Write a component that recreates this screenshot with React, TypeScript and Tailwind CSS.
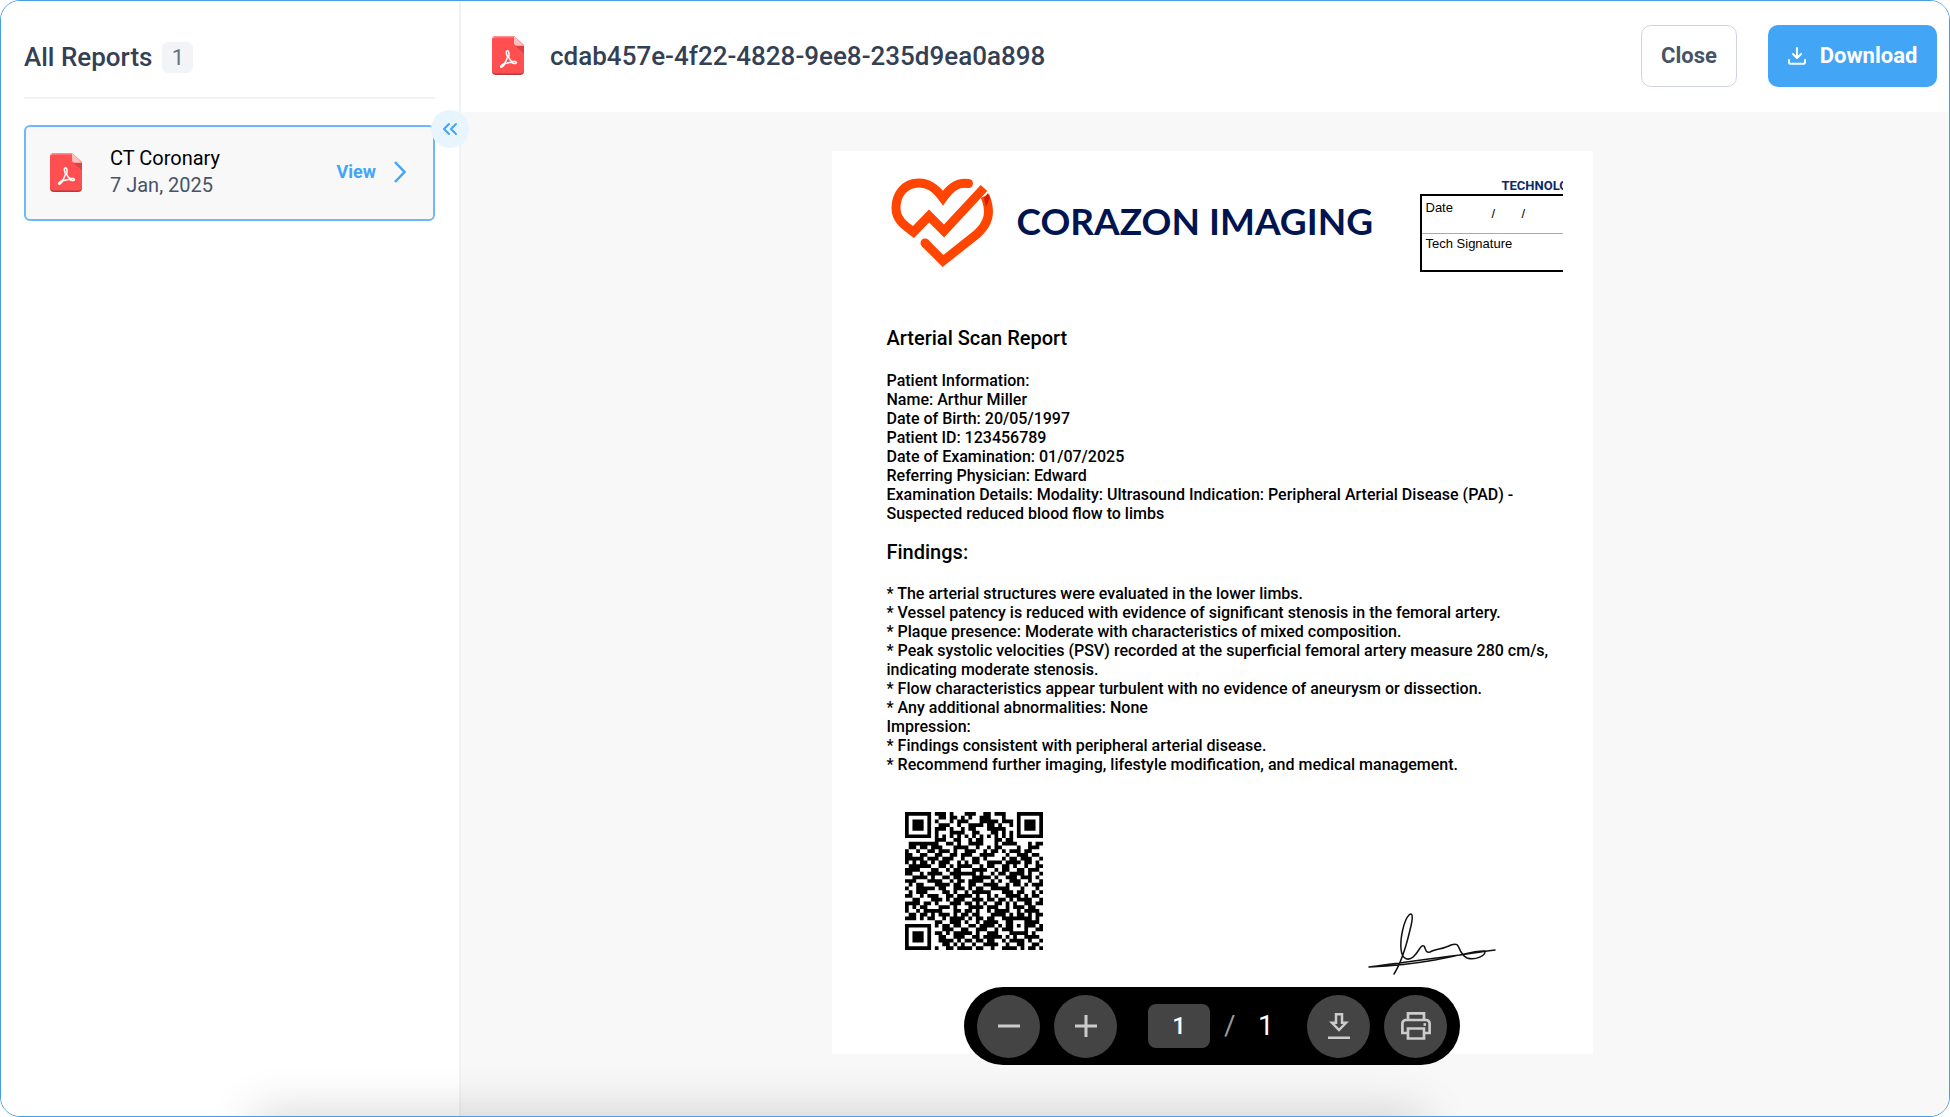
import { ChevronsLeft } from "lucide-react";

const QR_ROWS = [
  "1111111011101000111001101110001111111",
  "1000001001101101010011100010001000001",
  "1011101010001011100011111011101011101",
  "1011101001110010011110110100101011101",
  "1011101011101001011000111110001011101",
  "1000001010001111001100011010101000001",
  "1111111010101010101010101010101111111",
  "0000000011100110010110001101100000000",
  "0111111110011010011110001011110001011",
  "0110110111000111100100101100001001110",
  "1001001101110100111001011010111011000",
  "1100110011001101110011110001001110110",
  "1111101110111001001101000010110111001",
  "1010110101110010101100111101111011010",
  "0111111001101011110010110011010010011",
  "1111000110010110001111001011001101110",
  "1100101111001111111010010110111101001",
  "0011110100110110001111101001110111010",
  "1110001111001011011110010100111001001",
  "0101100011110110011001111001011010111",
  "1001111101100111010110011111000100010",
  "0101110000110100101111100011101100101",
  "1100101110011011110100101001111010110",
  "0011000111010111001110110110101111001",
  "1111011010001110110101001101010011011",
  "1010110001110100011110111001011101100",
  "1001011111000110110100101111001011110",
  "0110110101110101101100011110101101011",
  "1110101100101111010110110011111111010",
  "0000000011001110100101111001100011110",
  "1111111010110110011011110101101011101",
  "1000001000111001100111001011100010011",
  "1011101011010111110100111000111110100",
  "1011101001100111001101111101010011110",
  "1011101001111010110110110010111101001",
  "1000001000110101001001111001001100110",
  "1111111010011011110110010011110101101",
];

const QR_PATH = QR_ROWS.flatMap((row, y) =>
  [...row].map((cell, x) => (cell === "1" ? `M${x} ${y}h1v1h-1z` : "")),
).join("");

function PdfIcon() {
  return (
    <svg viewBox="0 0 32 39" className="h-[39px] w-8 shrink-0" aria-hidden="true">
      <path d="M4 1h18l10 9v25a4 4 0 0 1-4 4H4a4 4 0 0 1-4-4V5a4 4 0 0 1 4-4z" fill="#b53a3d" />
      <path d="M4 0h18l10 9v24.500a4 4 0 0 1-4 4H4a4 4 0 0 1-4-4V4a4 4 0 0 1 4-4z" fill="#ff4f50" />
      <path d="M4 0h18v1.500H4A4 4 0 0 0 .3 3.600 4 4 0 0 1 4 0z" fill="#ff8e8e" />
      <path d="M23 9.500h9v8z" fill="#d94345" />
      <path d="M22 0l10 9.700h-7a3 3 0 0 1-3-3z" fill="#ffc0c0" />
      <path
        d="M15.400 14.800c-1.600 0-1.200 3.400.2 6.200-.9 2.700-2.200 5.300-3.400 6.800-2.300 1-4 2.300-3.600 3 .6 1.100 2.700-.4 4.200-2.900 2-.8 4.200-1.400 6.200-1.700 1.900 1.300 5.100 2 5.400.6.300-1.200-2.400-1.600-4.700-1.300-1.300-1-2.300-2.500-3.100-4.200.6-2.200.8-6.500-1.200-6.500z"
        fill="none"
        stroke="#fff"
        strokeWidth="1.500"
        strokeLinejoin="round"
      />
    </svg>
  );
}

function DownloadIcon() {
  return (
    <svg viewBox="0 0 18 18" className="h-[18px] w-[18px]" fill="none" stroke="currentColor" strokeWidth="2" strokeLinecap="round" strokeLinejoin="round" aria-hidden="true">
      <path d="M9 1v9.500M5 7l4 4 4-4M1 13v2.500a1.200 1.200 0 0 0 1.200 1.200h13.600a1.200 1.200 0 0 0 1.200-1.200V13" />
    </svg>
  );
}

function Sidebar() {
  return (
    <aside className="relative flex w-[460px] shrink-0 flex-col border-r-2 border-[#f1f2f6] bg-white pr-6 pl-[23px]">
      <div className="flex h-[98px] items-center gap-2.5 border-b-2 border-[#f1f2f6] pt-5 pb-1">
        <h1 className="text-[26px] leading-8 font-medium text-[#344054]">All Reports</h1>
        <span className="flex h-[31px] w-[31px] items-center justify-center rounded-md bg-[#f2f4f7] text-[22px] text-[#667085]">1</span>
      </div>
      <ul className="mt-[26px]">
        <li className="flex h-24 items-center rounded-md border-2 border-[#6db8f9] bg-[#f8f8f8] pr-[27px] pb-0.5 pl-6">
          <PdfIcon />
          <div className="ml-7 grow text-xl leading-[27px]">
            <p className="text-black">CT Coronary</p>
            <p className="text-[#475467]">7 Jan, 2025</p>
          </div>
          <button type="button" className="flex items-center gap-[18px] text-lg font-bold text-[#42a5f5]">
            View
            <svg viewBox="0 0 12 22" className="h-[22px] w-3" fill="none" stroke="currentColor" strokeWidth="2.500" aria-hidden="true">
              <path d="M1 1l9.500 10L1 21" />
            </svg>
          </button>
        </li>
      </ul>
      <button type="button" aria-label="Collapse sidebar" className="absolute top-[109px] -right-2.5 z-10 flex h-[38px] w-[38px] items-center justify-center rounded-full bg-[#e8f4fe] text-[#42a5f5]">
        <ChevronsLeft className="h-6 w-6" strokeWidth={2} aria-hidden="true" />
      </button>
    </aside>
  );
}

function Header() {
  return (
    <header className="flex h-[111px] items-center bg-white pr-3 pb-0.5 pl-[31px]">
      <PdfIcon />
      <h2 className="ml-[26px] grow text-[26px] leading-8 font-medium text-[#344054]">cdab457e-4f22-4828-9ee8-235d9ea0a898</h2>
      <button type="button" className="h-[62px] w-24 rounded-[10px] border border-[#d0d5dd] text-[22px] font-bold text-[#475467]">Close</button>
      <button type="button" className="ml-[31px] flex h-[62px] w-[169px] items-center justify-center gap-3.5 rounded-[10px] bg-[#42a5f5] text-[22px] font-bold text-white">
        <DownloadIcon />
        Download
      </button>
    </header>
  );
}

function HeartLogo() {
  return (
    <svg viewBox="0 0 104 90" className="h-[90px] w-[104px] shrink-0" fill="none" stroke="#ff4500" strokeWidth="9" role="img" aria-label="Corazon Imaging heart">
      <path d="M77 5.500C66 4 59 10 52 20C44 9 37 5 28 5C13 5 5 17 5 30C5 42 14 48 22.500 54L38 38L53 53L93 10" />
      <path d="M77 5.500h.5" strokeLinecap="round" />
      <path d="M94 18c7 17 3 28-8 38L52 83L34 65" />
      <path d="M34 65h.1" strokeLinecap="round" />
      <path d="M93 20l4-5 2 5-4 9z" fill="#d81d00" stroke="none" />
    </svg>
  );
}

function ReportPage() {
  return (
    <article className="flex h-[903px] w-[761px] flex-col bg-white pl-[55px] text-base leading-[19px] font-medium text-black">
      <div className="flex h-[126px] items-start overflow-hidden pt-[27px] pr-[30px] pl-1">
        <HeartLogo />
        <p className="mt-[22px] ml-[22px] w-[403px] shrink-0 font-[Lato,sans-serif] text-[37px] leading-[42px] font-bold whitespace-nowrap text-[#001450]">CORAZON IMAGING</p>
        <div className="min-w-0 grow overflow-hidden font-['Liberation_Sans',sans-serif] text-[13px] leading-4 font-normal">
          <p className="pl-[82px] font-[Roboto,sans-serif] font-bold text-[#0b2a66]">TECHNOLOGIST</p>
          <div className="h-[78px] border-2 border-r-0 border-black">
            <p className="flex h-[38px] border-b border-[#aaa] pt-1 pl-1">
              <span className="w-[66px]">Date</span>
              <span className="w-[30px] pt-1.5">/</span>
              <span className="pt-1.5">/</span>
            </p>
            <p className="pt-0.5 pl-1">Tech Signature</p>
          </div>
        </div>
      </div>
      <h3 className="mt-[49px] text-xl leading-6">Arterial Scan Report</h3>
      <div className="mt-[21px]">
        <p>Patient Information:</p>
        <p>Name: Arthur Miller</p>
        <p>Date of Birth: 20/05/1997</p>
        <p>Patient ID: 123456789</p>
        <p>Date of Examination: 01/07/2025</p>
        <p>Referring Physician: Edward</p>
        <p>Examination Details: Modality: Ultrasound Indication: Peripheral Arterial Disease (PAD) -<br />Suspected reduced blood flow to limbs</p>
      </div>
      <h3 className="mt-[17px] text-xl leading-6">Findings:</h3>
      <div className="mt-[20px]">
        <p>* The arterial structures were evaluated in the lower limbs.</p>
        <p>* Vessel patency is reduced with evidence of significant stenosis in the femoral artery.</p>
        <p>* Plaque presence: Moderate with characteristics of mixed composition.</p>
        <p>* Peak systolic velocities (PSV) recorded at the superficial femoral artery measure 280 cm/s,<br />indicating moderate stenosis.</p>
        <p>* Flow characteristics appear turbulent with no evidence of aneurysm or dissection.</p>
        <p>* Any additional abnormalities: None</p>
        <p>Impression:</p>
        <p>* Findings consistent with peripheral arterial disease.</p>
        <p>* Recommend further imaging, lifestyle modification, and medical management.</p>
      </div>
      <div className="mt-[38px] flex items-start justify-between pr-24 pl-[18px]">
        <svg viewBox="0 0 37 37" className="h-[138px] w-[138px]" role="img" aria-label="QR code">
          <path d={QR_PATH} fill="#000" />
        </svg>
        <svg viewBox="0 0 130 66" className="mt-[100px] h-[66px] w-[130px]" fill="none" stroke="#111" strokeWidth="1.500" strokeLinecap="round" strokeLinejoin="round" role="img" aria-label="Signature">
          <path d="M27 62C34 51 39 35 43 18C47 3 45 0 42 3C37 8 33 26 34 37C35 48 42 50 48 43C52 39 54 32 57 34C59 37 58 41 63 40C68 37 77 37 84 33C95 29 89 40 100 46C109 49 119 43 118 39C109 38 96 43 68 48C45 52 23 54 2 55C38 50 80 45 128 38" />
        </svg>
      </div>
    </article>
  );
}

const toolButton = "flex h-[63px] w-[63px] items-center justify-center rounded-full bg-[#444] text-[#ccc]";

function Toolbar() {
  return (
    <div className="absolute bottom-[51px] left-1/2 ml-[7px] flex h-[78px] w-[496px] -translate-x-1/2 items-center rounded-full bg-black px-[13px] text-white">
      <button type="button" aria-label="Zoom out" className={toolButton}>
        <svg viewBox="0 0 22 22" className="h-[22px] w-[22px]" stroke="currentColor" strokeWidth="3"><path d="M0 11h22" /></svg>
      </button>
      <button type="button" aria-label="Zoom in" className={`${toolButton} ml-[14px]`}>
        <svg viewBox="0 0 22 22" className="h-[22px] w-[22px]" stroke="currentColor" strokeWidth="3"><path d="M0 11h22M11 0v22" /></svg>
      </button>
      <input aria-label="Page number" defaultValue="1" className="ml-[31px] h-11 w-[62px] rounded-lg bg-[#444] text-center text-2xl font-medium" />
      <span className="ml-[14px] w-3 text-[28px] text-[#999]">/</span>
      <span className="ml-[22px] grow text-[28px]">1</span>
      <button type="button" aria-label="Download document" className={toolButton}>
        <svg viewBox="0 0 22 26" className="h-[26px] w-[22px]" fill="none" stroke="currentColor" strokeWidth="2.500"><path d="M0 24.700h22M8 1.300h6v8.500h4L11 17 4 9.800h4z" /></svg>
      </button>
      <button type="button" aria-label="Print" className={`${toolButton} ml-[14px]`}>
        <svg viewBox="0 0 30 28" className="h-7 w-[30px]" fill="none" stroke="currentColor" strokeWidth="2.700">
          <path d="M7 8V1.400h16V8M7 21H1.400v-9.500A3.500 3.500 0 0 1 5 8h20a3.500 3.500 0 0 1 3.600 3.500V21H23M7 16.500h16v10H7z" />
          <path d="M22.500 12.500h2.500" />
        </svg>
      </button>
    </div>
  );
}

export default function App() {
  return (
    <div className="relative flex h-screen overflow-hidden rounded-[20px] border border-[#459de9] bg-white font-[Roboto,sans-serif]">
      <Sidebar />
      <main className="relative flex min-w-0 grow flex-col bg-[#f8f8f8]">
        <Header />
        <div className="flex grow justify-center pt-[39px] pl-[14px]">
          <ReportPage />
        </div>
        <Toolbar />
      </main>
      <div className="pointer-events-none absolute right-[27%] -bottom-10 left-[13%] h-10 shadow-[0_0_50px_rgba(0,0,0,0.2)]" />
    </div>
  );
}
